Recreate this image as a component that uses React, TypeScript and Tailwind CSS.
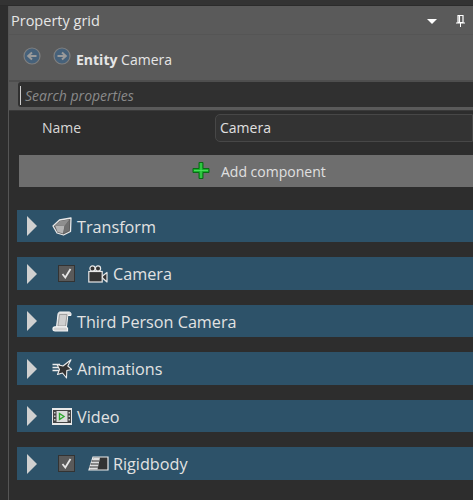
const font = { fontFamily: '"Open Sans", "Noto Sans", sans-serif' };

function CubeIcon() {
  return (
    <svg width="20" height="19" viewBox="0 0 20 19" fill="none">
      <path d="M1 9 L7.5 3 L19 1 L18.5 14.5 L11.5 18 L5 16 Z" fill="#5c5c5c" stroke="#e8e8e8" strokeWidth="1.3" strokeLinejoin="round" />
      <path d="M3 8.5 L12.5 9 L11 16.5 L5.5 15 Z" fill="#b4b4b4" />
      <path d="M12.5 9 L17.5 3 L17 13.5 L11.5 16.5 Z" fill="#707070" />
      <path d="M3 8.5 L8 4 L17.5 2.5 L12.5 9 Z" fill="#8e8e8e" />
    </svg>
  );
}

function MovieCamIcon() {
  return (
    <svg width="20" height="18" viewBox="0 0 20 18" fill="none">
      <circle cx="4.5" cy="3.5" r="2.6" fill="#333" stroke="#e8e8e8" strokeWidth="1.2" />
      <circle cx="10" cy="3.5" r="2.6" fill="#333" stroke="#e8e8e8" strokeWidth="1.2" />
      <rect x="0.8" y="6.5" width="13.4" height="10.5" fill="#333" stroke="#e8e8e8" strokeWidth="1.2" />
      <path d="M14.5 11 L19 7.5 V17 L14.5 13 Z" fill="#333" stroke="#e8e8e8" strokeWidth="1.2" strokeLinejoin="round" />
    </svg>
  );
}

function ScrollIcon() {
  return (
    <svg width="20" height="21" viewBox="0 0 20 21" fill="none">
      <path d="M4.5 16 L6 3 C6.2 1.8 7 1 8 1 H17 C18.2 1 19 1.8 19 3 V4.5 H15.8 L14.5 16 Z" fill="#dcdcdc" stroke="#f4f4f4" strokeWidth="1" />
      <path d="M7.5 3.5 H15 L13.5 15 H6 Z" fill="#cfcfcf" stroke="#8a8a8a" strokeWidth="0.7" />
      <path d="M1 18 C1 16.5 2 15.8 3 15.8 H13.5 L15.5 17 V19.8 H3 C2 19.8 1 19.5 1 18 Z" fill="#d2d2d2" stroke="#f4f4f4" strokeWidth="1.2" />
    </svg>
  );
}

function AnimIcon() {
  return (
    <svg width="20" height="20" viewBox="0 0 20 20" fill="none">
      <path d="M0.5 5.5 H8 M0.5 8.5 H7 M0.5 11.5 H7" stroke="#ececec" strokeWidth="1.7" />
      <path d="M19 0.8 L15.8 7 L19.8 10.5 L14.8 11.5 L14.5 19 L10.5 14 L5.5 15.5 L7.5 10.5 L5 5.5 L11 7 Z" fill="#333" stroke="#ececec" strokeWidth="1.1" strokeLinejoin="round" />
    </svg>
  );
}

function FilmIcon() {
  return (
    <svg width="20" height="17" viewBox="0 0 20 17" fill="none">
      <rect x="0" y="0" width="20" height="17" fill="#e8e8e8" />
      <rect x="1" y="2" width="18" height="13" fill="#444" />
      <rect x="4.5" y="3" width="11" height="11" fill="#dcdcdc" />
      <path d="M7.5 5.5 L12 8.5 L7.5 11.5 Z" fill="none" stroke="#2ea82e" strokeWidth="1.4" />
      <path d="M2.8 4 V5.5 M2.8 7.5 V9 M2.8 11 V12.5 M17.2 4 V5.5 M17.2 7.5 V9 M17.2 11 V12.5" stroke="#e8e8e8" strokeWidth="1.2" />
    </svg>
  );
}

function BodyIcon() {
  return (
    <svg width="21" height="15" viewBox="0 0 21 15" fill="none">
      <path d="M5 1 H20 V14 H1 Z" fill="#333" stroke="#ececec" strokeWidth="1.2" />
      <path d="M5.5 1.5 H12 L9.5 13.5 H1.5 Z" fill="#dedede" />
      <path d="M3.5 5 H11 M2.5 8 H10.5 M1.5 11 H10" stroke="#333" strokeWidth="1" />
    </svg>
  );
}

function Check() {
  return (
    <div className="w-[17px] h-[17px] bg-[#5a5a5a] border border-[#333] flex items-center justify-center">
      <svg width="11" height="11" viewBox="0 0 11 11" fill="none">
        <path d="M1.5 6 L4.3 9.5 L9.5 1" stroke="#e6e6e6" strokeWidth="1.8" />
      </svg>
    </div>
  );
}

function NavArrow({ dir }: { dir: "left" | "right" }) {
  return (
    <svg width="18" height="18" viewBox="0 0 18 18" fill="none">
      <circle cx="9" cy="9" r="8" fill="#46617a" stroke="#7f7f7f" strokeWidth="1.2" />
      <path
        d={dir === "left" ? "M13.5 9 H6 M9 5.5 L5.2 9 L9 12.5" : "M4.5 9 H12 M9 5.5 L12.8 9 L9 12.5"}
        stroke="#9a9a9a"
        strokeWidth="2"
      />
    </svg>
  );
}

const rows = [
  { label: "Transform", icon: <CubeIcon />, check: false },
  { label: "Camera", icon: <MovieCamIcon />, check: true },
  { label: "Third Person Camera", icon: <ScrollIcon />, check: false },
  { label: "Animations", icon: <AnimIcon />, check: false },
  { label: "Video", icon: <FilmIcon />, check: false },
  { label: "Rigidbody", icon: <BodyIcon />, check: true },
];

function Row({ label, icon, check }: { label: string; icon: React.ReactNode; check: boolean }) {
  return (
    <div className="h-[32.5px] bg-[#2d5269] flex items-center text-[#e2e2e2] text-[16.2px]">
      <div className="ml-[10px] w-0 h-0 border-y-[10px] border-y-transparent border-l-[10px] border-l-[#d0d0d0]" />
      {check ? (
        <>
          <div className="ml-[21px]"><Check /></div>
          <div className="ml-[12px] w-[22px] flex justify-center">{icon}</div>
          <span className="ml-[4px] pt-[2px]">{label}</span>
        </>
      ) : (
        <>
          <div className="ml-[14px] w-[22px] flex justify-center">{icon}</div>
          <span className="ml-[4px] pt-[2px]">{label}</span>
        </>
      )}
    </div>
  );
}

export default function App() {
  return (
    <div className="w-[473px] h-[500px] overflow-hidden bg-[#2d2d2d] flex flex-col" style={font}>
      <div className="h-[6px] bg-[#333333] border-b border-[#2b2b2b] shrink-0" />
      <div className="flex-1 min-h-0 ml-[8px] border-l border-[#555] flex flex-col">
        <div className="bg-[#5a5a5a] h-[76px] shrink-0 border-b-2 border-[#4e4e4e]">
          <div className="h-[29px] flex items-center justify-between pl-[2px] pt-[2px] border-b border-[#555]">
            <span className="text-[14.5px] text-[#e6e6e6]">Property grid</span>
            <div className="flex items-center gap-[19px] pr-[8px]">
              <svg width="10" height="5" viewBox="0 0 10 5"><path d="M0 0 H10 L5 5 Z" fill="#fff" /></svg>
              <svg width="9" height="12" viewBox="0 0 9 12" fill="none">
                <path d="M2 0.5 H7 V7.5 H2 Z M3.5 1 V7" stroke="#fff" strokeWidth="1.2" />
                <path d="M0 8 H9 M4.5 8 V12" stroke="#fff" strokeWidth="1" />
              </svg>
            </div>
          </div>
          <div className="flex items-center mt-[14px] pl-[14px]">
            <div className="-mt-[7px]"><NavArrow dir="left" /></div>
            <div className="ml-[12px] -mt-[8px]"><NavArrow dir="right" /></div>
            <span className="ml-[5px] text-[14px] text-[#e6e6e6]"><b>Entity</b> Camera</span>
          </div>
        </div>
        <div className="h-[25px] shrink-0 bg-[#5a5a5a] pl-[9px]">
          <div className="h-[25px] bg-[#303030] rounded-l-[3px] flex items-center pt-[2px]">
            <div className="w-px h-[19px] bg-[#cfcfcf] ml-[2px]" />
            <span className="ml-[4px] italic text-[14px] text-[#8a8a8a]">Search properties</span>
          </div>
        </div>
        <div className="h-[4px] shrink-0 bg-[#5a5a5a] border-b border-[#3a3a3a]" />
        <div className="flex-1 min-h-0 bg-[#2d2d2d] pl-[8px]">
          <div className="h-[28px] mt-[3px] flex items-center">
            <span className="ml-[25px] w-[173px] text-[14px] text-[#d8d8d8] pb-[2px]">Name</span>
            <div className="flex-1 h-[28px] flex items-center pl-[4px] pb-[2px] bg-[#333] border border-[#474747] rounded-l-[5px] text-[14px] text-[#e0e0e0]">
              Camera
            </div>
          </div>
          <div className="h-[32px] mt-[13px] ml-[2px] pl-[173px] bg-[#6e6e6e] flex items-center gap-[11px] text-[14px] text-[#e0e0e0]">
            <svg width="18" height="20" viewBox="0 0 18 20" fill="none">
              <path d="M7 1.5 H11 V7.5 H17 V11.5 H11 V17.5 H7 V11.5 H1 V7.5 H7 Z" fill="#16b22a" stroke="#0a6a16" strokeWidth="1" />
              <path d="M9 2 V17 M2 9.5 H16" stroke="#4fe05f" strokeWidth="0.9" />
            </svg>
            <span>Add component</span>
          </div>
          <div className="mt-[22.75px] flex flex-col gap-[15px]">
            {rows.map((r) => (
              <Row key={r.label} {...r} />
            ))}
          </div>
        </div>
      </div>
    </div>
  );
}
